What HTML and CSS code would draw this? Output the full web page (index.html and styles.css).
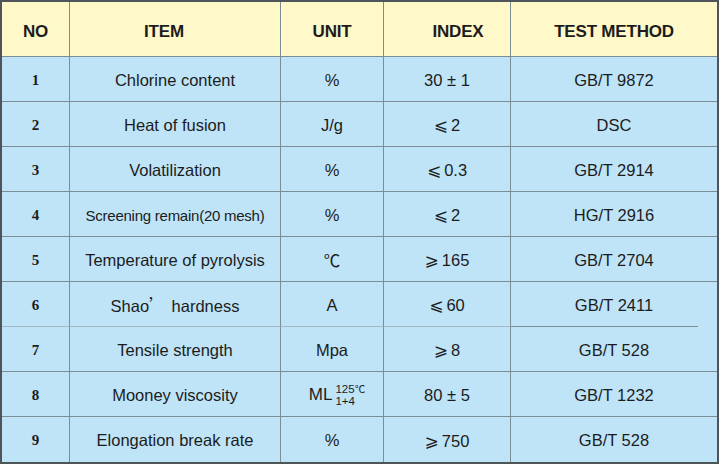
FILE: index.html
```html
<!DOCTYPE html>
<html>
<head>
<meta charset="utf-8">
<link rel="stylesheet" href="styles.css">
</head>
<body>
<table class="spec">
  <colgroup>
    <col class="c-no"><col class="c-item"><col class="c-unit"><col class="c-index"><col class="c-method">
  </colgroup>
  <thead>
    <tr class="head">
      <th>NO</th><th class="h-item">ITEM</th><th>UNIT</th><th class="h-index">INDEX</th><th class="last">TEST METHOD</th>
    </tr>
  </thead>
  <tbody>
    <tr><td class="no">1</td><td>Chlorine content</td><td>%</td><td>30 ± 1</td><td class="last">GB/T 9872</td></tr>
    <tr><td class="no">2</td><td>Heat of fusion</td><td>J/g</td><td><span class="sym">⩽</span>2</td><td class="last">DSC</td></tr>
    <tr><td class="no">3</td><td>Volatilization</td><td>%</td><td><span class="sym">⩽</span>0.3</td><td class="last">GB/T 2914</td></tr>
    <tr><td class="no">4</td><td class="small">Screening remain(20 mesh)</td><td>%</td><td><span class="sym">⩽</span>2</td><td class="last">HG/T 2916</td></tr>
    <tr><td class="no">5</td><td>Temperature of pyrolysis</td><td><span class="cjk">℃</span></td><td><span class="sym">⩾</span>165</td><td class="last">GB/T 2704</td></tr>
    <tr class="r6"><td class="no">6</td><td>Shao<span class="apos">’</span>hardness</td><td>A</td><td><span class="sym">⩽</span>60</td><td class="last">GB/T 2411</td></tr>
    <tr><td class="no">7</td><td>Tensile strength</td><td>Mpa</td><td><span class="sym">⩾</span>8</td><td class="last">GB/T 528</td></tr>
    <tr><td class="no">8</td><td>Mooney viscosity</td><td><span class="ml">ML<span class="stack"><span class="sup">125<span class="cjk">℃</span></span><span class="sub">1+4</span></span></span></td><td>80 ± 5</td><td class="last">GB/T 1232</td></tr>
    <tr class="end"><td class="no">9</td><td>Elongation break rate</td><td>%</td><td><span class="sym">⩾</span>750</td><td class="last">GB/T 528</td></tr>
  </tbody>
</table>
</body>
</html>
```

FILE: styles.css
```css
html, body {
  margin: 0;
  padding: 0;
  background: #ffffff;
}

.spec {
  border-collapse: separate;
  border-spacing: 0;
  table-layout: fixed;
  width: 719px;
  border: 2px solid #4d5558;
  font-family: "Liberation Sans", Arial, sans-serif;
  color: #1c1c1c;
}

.c-no { width: 68px; }
.c-item { width: 211px; }
.c-unit { width: 103px; }
.c-index { width: 127px; }
.c-method { width: 206px; }

.spec th, .spec td {
  box-sizing: border-box;
  padding: 0;
  text-align: center;
  vertical-align: middle;
  border-right: 1px solid #7d8d94;
  border-bottom: 1px solid #7d8d94;
}

.spec .last { border-right: none; }
.spec .end td { border-bottom: none; }

.head th {
  height: 55px;
  background: #fff8c9;
  font-weight: bold;
  font-size: 17px;
  letter-spacing: -0.2px;
  padding-top: 6px;
}

.head .h-item { padding-right: 22px; }
.head .h-index { padding-left: 22px; }

.spec td {
  height: 45px;
  background: #bfe4f8;
  font-size: 16.5px;
  padding-top: 2px;
}

.spec td.no {
  font-family: "Liberation Serif", "Times New Roman", serif;
  font-weight: bold;
  font-size: 15px;
}

.spec td.small {
  font-size: 15px;
  letter-spacing: -0.25px;
}

.sym {
  font-family: "DejaVu Sans", sans-serif;
  font-size: 17px;
  margin-right: 3px;
}

.cjk {
  font-family: "Noto Sans CJK SC", sans-serif;
}

.apos {
  font-family: "Noto Sans CJK SC", sans-serif;
  margin-right: 6px;
}

.ml {
  display: inline-flex;
  align-items: center;
  padding-left: 10px;
  font-size: 17px;
}

.stack {
  display: inline-flex;
  flex-direction: column;
  font-size: 11.5px;
  line-height: 13px;
  margin-left: 3px;
  text-align: left;
}

.stack .sup { height: 13px; }
.stack .sub { height: 13px; }
.stack .cjk { font-size: 10.5px; line-height: 13px; }

.r6 td { border-bottom-color: #9fb9c6; }
.r6 td.last {
  border-bottom: none;
  background-image: linear-gradient(#7d8d94, #7d8d94);
  background-size: 187px 1px;
  background-position: 0 100%;
  background-repeat: no-repeat;
}
```
